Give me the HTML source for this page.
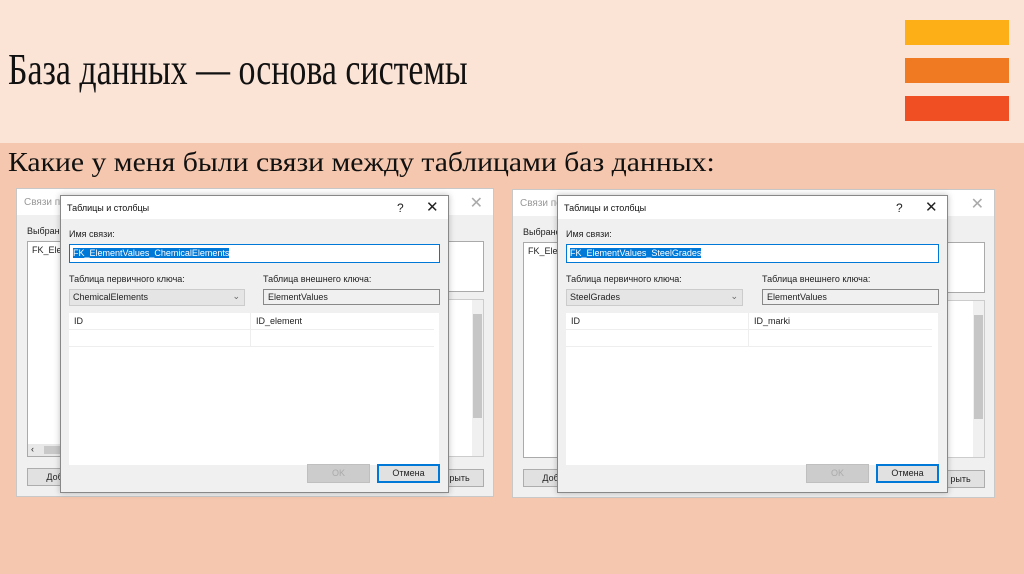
<!DOCTYPE html>
<html><head><meta charset="utf-8">
<style>
*{box-sizing:border-box;margin:0;padding:0}
body{width:1024px;height:574px;overflow:hidden;background:#f5c7ae;position:relative;font-family:"Liberation Sans",sans-serif}
.top{position:absolute;left:0;top:0;width:1024px;height:143px;background:#fbe3d6}
.bar{position:absolute;left:905px;width:104px;height:25px}
.t1{position:absolute;left:8px;top:44px;font:44px "Liberation Serif",serif;color:#111;white-space:nowrap;transform-origin:left top}
.t2{position:absolute;left:8px;top:147px;font:27px "Liberation Serif",serif;color:#111;white-space:nowrap;transform-origin:left top}
.g{position:absolute;width:478px;height:309px}
.outer{position:absolute;left:0;top:0;width:478px;height:309px;background:#f0f0f0;border:1px solid #c8c8c8}
.otitle{position:absolute;left:0;top:0;width:100%;height:26px;background:#fff;font-size:10px;color:#999;padding:8px 7px}
.ox{position:absolute;right:10px;top:4px;font-size:16px;color:#aaa}
.s{position:absolute;font-size:9px;color:#222;white-space:nowrap}
.box{position:absolute;background:#fff;border:1px solid #aaa}
.btn{position:absolute;background:#e1e1e1;border:1px solid #adadad;font-size:9px;text-align:center;line-height:16px;color:#222}
.inner{position:absolute;left:44px;top:7px;width:389px;height:298px;background:#f0f0f0;border:1px solid #888;box-shadow:0 0 6px rgba(0,0,0,.25)}
.ititle{position:absolute;left:0;top:0;width:100%;height:23px;background:#fff;font-size:9px;padding:7px 6px;color:#111}
</style></head><body>
<div class="top"></div>
<div class="bar" style="top:20px;background:#fcaf17"></div>
<div class="bar" style="top:58px;background:#f07a22"></div>
<div class="bar" style="top:96px;background:#f04e23"></div>
<div class="t1" style="transform:scaleX(.77)">База данных — основа системы</div>
<div class="t2" style="transform:scaleX(1.1)">Какие у меня были связи между таблицами баз данных:</div>

<!-- left -->
<div class="g" style="left:16px;top:188px">
 <div class="outer">
  <div class="otitle">Связи по</div><div class="ox">✕</div>
  <div class="s" style="left:10px;top:37px">Выбрано</div>
  <div class="box" style="left:10px;top:52px;width:60px;height:216px"><div class="s" style="left:4px;top:3px">FK_Elem</div>
   <div style="position:absolute;left:0;bottom:0;width:100%;height:12px;background:#e8e8e8"><div class="s" style="left:3px;top:0">‹</div><div style="position:absolute;left:16px;top:2px;width:40px;height:8px;background:#c8c8c8"></div></div></div>
  <div class="box" style="left:420px;top:52px;width:47px;height:51px"></div>
  <div class="box" style="left:420px;top:110px;width:47px;height:158px;border-color:#ccc"><div style="position:absolute;right:0;top:0;width:11px;height:100%;background:#f0f0f0"></div><div style="position:absolute;right:1px;top:14px;width:9px;height:104px;background:#c6c6c6"></div></div>
  <div class="btn" style="left:10px;top:279px;width:60px;height:18px">Доба</div>
  <div class="btn" style="left:418px;top:280px;width:49px;height:18px">рыть</div>
 </div>
 <div class="inner">
  <div class="ititle">Таблицы и столбцы</div>
  <div class="s" style="left:336px;top:5px;font-size:12px">?</div><div class="s" style="left:365px;top:2px;font-size:15px">✕</div>
  <div class="s" style="left:8px;top:33px">Имя связи:</div>
  <div class="box" style="left:8px;top:48px;width:371px;height:19px;border-color:#0078d7"><span class="s" style="left:3px;top:3px;background:#0078d7;color:#fff">FK_ElementValues_ChemicalElements</span></div>
  <div class="s" style="left:8px;top:78px">Таблица первичного ключа:</div>
  <div class="s" style="left:202px;top:78px">Таблица внешнего ключа:</div>
  <div class="box" style="left:8px;top:93px;width:176px;height:17px;background:#e5e5e5;border-color:#ccc"><span class="s" style="left:3px;top:2px">ChemicalElements</span><span class="s" style="right:4px;top:1px;color:#666">⌄</span></div>
  <div class="box" style="left:202px;top:93px;width:177px;height:16px;background:#f0f0f0;border-color:#888"><span class="s" style="left:4px;top:2px">ElementValues</span></div>
  <div style="position:absolute;left:8px;top:117px;width:370px;height:152px;background:#fff"></div>
  <div style="position:absolute;left:8px;top:117px;width:365px;height:34px;border-bottom:1px solid #eee"><div style="position:absolute;left:0;top:16px;width:100%;border-top:1px solid #eee"></div><div style="position:absolute;left:181px;top:0;height:100%;border-left:1px solid #eee"></div><span class="s" style="left:5px;top:3px">ID</span><span class="s" style="left:187px;top:3px">ID_element</span></div>
  <div class="btn" style="left:246px;top:268px;width:63px;height:19px;color:#aaa;background:#ccc;border-color:#bfbfbf">OK</div>
  <div class="btn" style="left:316px;top:268px;width:63px;height:19px;border:2px solid #0078d7;line-height:15px">Отмена</div>
 </div>
</div>

<!-- right -->
<div class="g" style="left:512px;top:189px;width:483px">
 <div class="outer" style="width:483px">
  <div class="otitle">Связи по</div><div class="ox">✕</div>
  <div class="s" style="left:10px;top:37px">Выбрано</div>
  <div class="box" style="left:10px;top:52px;width:60px;height:216px"><div class="s" style="left:4px;top:3px">FK_Elem</div></div>
  <div class="box" style="left:425px;top:52px;width:47px;height:51px"></div>
  <div class="box" style="left:425px;top:110px;width:47px;height:158px;border-color:#ccc"><div style="position:absolute;right:0;top:0;width:11px;height:100%;background:#f0f0f0"></div><div style="position:absolute;right:1px;top:14px;width:9px;height:104px;background:#c6c6c6"></div></div>
  <div class="btn" style="left:10px;top:279px;width:60px;height:18px">Доба</div>
  <div class="btn" style="left:423px;top:280px;width:49px;height:18px">рыть</div>
 </div>
 <div class="inner" style="left:45px;top:6px;width:391px">
  <div class="ititle">Таблицы и столбцы</div>
  <div class="s" style="left:338px;top:5px;font-size:12px">?</div><div class="s" style="left:367px;top:2px;font-size:15px">✕</div>
  <div class="s" style="left:8px;top:33px">Имя связи:</div>
  <div class="box" style="left:8px;top:48px;width:373px;height:19px;border-color:#0078d7"><span class="s" style="left:3px;top:3px;background:#0078d7;color:#fff">FK_ElementValues_SteelGrades</span></div>
  <div class="s" style="left:8px;top:78px">Таблица первичного ключа:</div>
  <div class="s" style="left:204px;top:78px">Таблица внешнего ключа:</div>
  <div class="box" style="left:8px;top:93px;width:177px;height:17px;background:#e5e5e5;border-color:#ccc"><span class="s" style="left:3px;top:2px">SteelGrades</span><span class="s" style="right:4px;top:1px;color:#666">⌄</span></div>
  <div class="box" style="left:204px;top:93px;width:177px;height:16px;background:#f0f0f0;border-color:#888"><span class="s" style="left:4px;top:2px">ElementValues</span></div>
  <div style="position:absolute;left:8px;top:117px;width:372px;height:152px;background:#fff"></div>
  <div style="position:absolute;left:8px;top:117px;width:366px;height:34px;border-bottom:1px solid #eee"><div style="position:absolute;left:0;top:16px;width:100%;border-top:1px solid #eee"></div><div style="position:absolute;left:182px;top:0;height:100%;border-left:1px solid #eee"></div><span class="s" style="left:5px;top:3px">ID</span><span class="s" style="left:188px;top:3px">ID_marki</span></div>
  <div class="btn" style="left:248px;top:268px;width:63px;height:19px;color:#aaa;background:#ccc;border-color:#bfbfbf">OK</div>
  <div class="btn" style="left:318px;top:268px;width:63px;height:19px;border:2px solid #0078d7;line-height:15px">Отмена</div>
 </div>
</div>
</body></html>
